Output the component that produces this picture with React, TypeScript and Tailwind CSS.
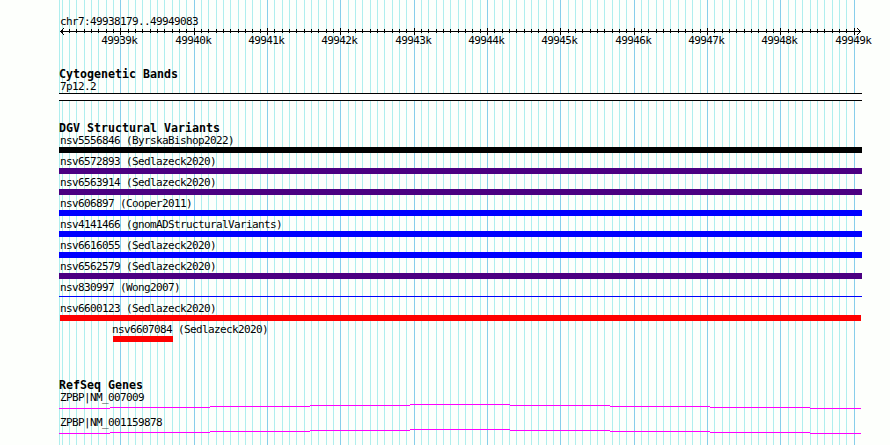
import clsx from "clsx";

const LEFT = 59;
const WIDTH = 803;
const FIRST_TICK = 120;
const TICK_STEP = 22 / 3;

interface Tick {
  x: number;
  label?: string;
}

// i = 0 is 49939k, every tenth tick is a major one
const ticks: Tick[] = Array.from({ length: 109 }, (_, n) => {
  const i = n - 8;
  return {
    x: Math.ceil(FIRST_TICK + i * TICK_STEP - 0.001),
    label: i >= 0 && i % 10 === 0 ? `${49939 + i / 10}k` : undefined,
  };
});

interface Variant {
  name: string;
  color: string;
  offset?: string;
  bar?: string;
}

const variants: Variant[] = [
  { name: "nsv5556846 (ByrskaBishop2022)", color: "bg-black" },
  { name: "nsv6572893 (Sedlazeck2020)", color: "bg-[#4b0082]" },
  { name: "nsv6563914 (Sedlazeck2020)", color: "bg-[#4b0082]" },
  { name: "nsv606897 (Cooper2011)", color: "bg-[#0000ff]" },
  { name: "nsv4141466 (gnomADStructuralVariants)", color: "bg-[#0000ff]" },
  { name: "nsv6616055 (Sedlazeck2020)", color: "bg-[#0000ff]" },
  { name: "nsv6562579 (Sedlazeck2020)", color: "bg-[#4b0082]" },
  { name: "nsv830997 (Wong2007)", color: "bg-[#0000ff]", bar: "mt-[2px] mb-[3px] h-px w-full" },
  { name: "nsv6600123 (Sedlazeck2020)", color: "bg-[#ff0000]", bar: "ml-px h-[6px] w-[801px]" },
  {
    name: "nsv6607084 (Sedlazeck2020)",
    color: "bg-[#ff0000]",
    offset: "pl-[53px]",
    bar: "ml-[54px] h-[6px] w-[60px]",
  },
];

const genes = ["ZPBP|NM_007009", "ZPBP|NM_001159878"];

// [start, end, y] in track coordinates
const intronSteps = [
  [0, 51, 4],
  [51, 151, 3],
  [151, 251, 2],
  [251, 351, 1],
  [351, 451, 0],
  [451, 551, 1],
  [551, 651, 2],
  [651, 751, 3],
  [751, 802, 4],
];

function GridLines() {
  return (
    <svg className="absolute inset-0" width="890" height="445" shapeRendering="crispEdges">
      <rect x={LEFT} y="0" width="1" height="445" fill="#afeeee" />
      {ticks.map((t) => (
        <rect key={t.x} x={t.x} y="0" width="1" height="445" fill={t.label ? "#87ceeb" : "#afeeee"} />
      ))}
    </svg>
  );
}

function Ruler() {
  return (
    <svg className="block overflow-visible" width={WIDTH} height="19">
      <g shapeRendering="crispEdges">
        <rect x="1" y="3" width="801" height="1" />
        {[1, 2, 3].map((d) => (
          <g key={d}>
            <rect x={1 + d} y={3 - d} width="1" height="1" />
            <rect x={1 + d} y={3 + d} width="1" height="1" />
            <rect x={801 - d} y={3 - d} width="1" height="1" />
            <rect x={801 - d} y={3 + d} width="1" height="1" />
          </g>
        ))}
        {ticks.map((t) => (
          <rect key={t.x} x={t.x - LEFT} y={t.label ? 0 : 1} width="1" height={t.label ? 7 : 4} />
        ))}
      </g>
      {ticks
        .filter((t) => t.label)
        .map((t) => (
          <text key={t.x} x={t.x - LEFT - 18.7} y="16">
            {t.label}
          </text>
        ))}
    </svg>
  );
}

function Heading({ children }: { children: string }) {
  return (
    <h2 className="h-[14px] whitespace-pre text-[11.63px] leading-[14px] font-bold tracking-normal">
      {children}
    </h2>
  );
}

function Label({ children, className = "pl-px" }: { children: string; className?: string }) {
  return <p className={clsx("h-[12px] whitespace-pre", className)}>{children}</p>;
}

export default function App() {
  return (
    <div className="relative h-[445px] w-[890px] overflow-hidden bg-[#fdfffc] font-['DejaVu_Sans_Mono',monospace] text-[11px] leading-[12px] tracking-[-0.622px] text-black">
      <GridLines />
      <main className="relative ml-[59px] flex w-[803px] flex-col pt-[16px]">
        <section>
          <Label>chr7:49938179..49949083</Label>
          <Ruler />
        </section>

        <section className="mt-[20px]">
          <Heading>Cytogenetic Bands</Heading>
          <Label>7p12.2</Label>
          <div className="h-[8px] border-y border-black bg-white" />
        </section>

        <section className="mt-[20px]">
          <Heading>DGV Structural Variants</Heading>
          <div className="flex flex-col gap-[3px]">
            {variants.map((v) => (
              <div key={v.name}>
                <Label className={v.offset ?? "pl-px"}>{v.name}</Label>
                <div className={clsx(v.color, v.bar ?? "h-[6px] w-full")} />
              </div>
            ))}
          </div>
        </section>

        <section className="mt-[36px]">
          <Heading>RefSeq Genes</Heading>
          <div className="flex flex-col gap-[8px]">
            {genes.map((name) => (
              <div key={name}>
                <Label>{name}</Label>
                <svg className="block" width={WIDTH} height="5" shapeRendering="crispEdges">
                  {intronSteps.map(([start, end, y]) => (
                    <rect key={start} x={start} y={y} width={end - start} height="1" fill="#ff00ff" />
                  ))}
                </svg>
              </div>
            ))}
          </div>
        </section>
      </main>
    </div>
  );
}
